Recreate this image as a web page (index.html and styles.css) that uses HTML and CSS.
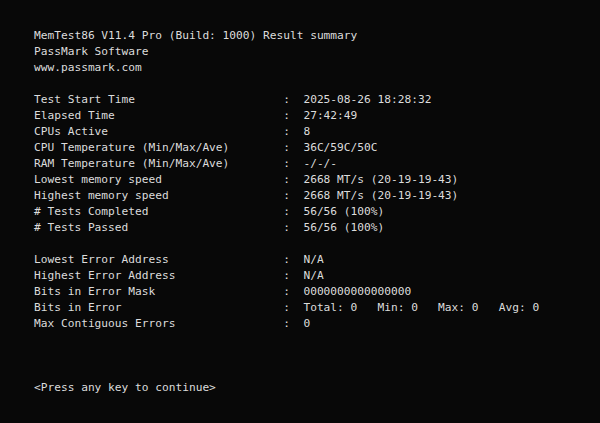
FILE: index.html
```html
<!DOCTYPE html>
<html>
<head>
<meta charset="utf-8">
<link rel="stylesheet" href="styles.css">
</head>
<body>
<div class="screen">
  <div class="header">
    <div class="line">MemTest86 V11.4 Pro (Build: 1000) Result summary</div>
    <div class="line">PassMark Software</div>
    <div class="line">www.passmark.com</div>
  </div>
  <div class="group">
    <div class="row"><span>Test Start Time</span><span>:</span><span>2025-08-26 18:28:32</span></div>
    <div class="row"><span>Elapsed Time</span><span>:</span><span>27:42:49</span></div>
    <div class="row"><span>CPUs Active</span><span>:</span><span>8</span></div>
    <div class="row"><span>CPU Temperature (Min/Max/Ave)</span><span>:</span><span>36C/59C/50C</span></div>
    <div class="row"><span>RAM Temperature (Min/Max/Ave)</span><span>:</span><span>-/-/-</span></div>
    <div class="row"><span>Lowest memory speed</span><span>:</span><span>2668 MT/s (20-19-19-43)</span></div>
    <div class="row"><span>Highest memory speed</span><span>:</span><span>2668 MT/s (20-19-19-43)</span></div>
    <div class="row"><span># Tests Completed</span><span>:</span><span>56/56 (100%)</span></div>
    <div class="row"><span># Tests Passed</span><span>:</span><span>56/56 (100%)</span></div>
  </div>
  <div class="group">
    <div class="row"><span>Lowest Error Address</span><span>:</span><span>N/A</span></div>
    <div class="row"><span>Highest Error Address</span><span>:</span><span>N/A</span></div>
    <div class="row"><span>Bits in Error Mask</span><span>:</span><span>0000000000000000</span></div>
    <div class="row"><span>Bits in Error</span><span>:</span><span>Total: 0   Min: 0   Max: 0   Avg: 0</span></div>
    <div class="row"><span>Max Contiguous Errors</span><span>:</span><span>0</span></div>
  </div>
  <div class="prompt">&lt;Press any key to continue&gt;</div>
</div>
</body>
</html>
```
FILE: styles.css
```css
html, body {
  margin: 0;
  padding: 0;
  background: #080808;
}
.screen {
  width: 600px;
  height: 423px;
  box-sizing: border-box;
  padding: 28px 0 0 34px;
  font-family: "DejaVu Sans Mono", "Liberation Mono", monospace;
  font-size: 11.2px;
  line-height: 16px;
  color: #dcdcdc;
}
.line {
  height: 16px;
  white-space: pre;
}
.group {
  margin-top: 16px;
}
.row {
  display: grid;
  grid-template-columns: 37ch 3ch auto;
  height: 16px;
}
.row span {
  white-space: pre;
}
.prompt {
  margin-top: 48px;
  white-space: pre;
}
```
